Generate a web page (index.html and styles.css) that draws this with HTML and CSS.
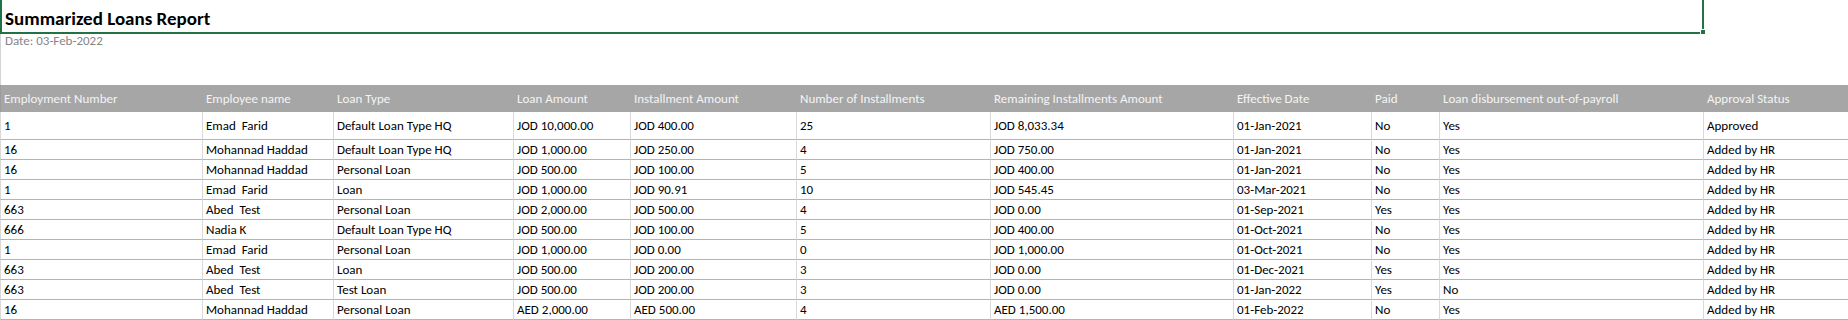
FILE: index.html
```html
<!doctype html>
<html lang="en">
  <head>
    <meta charset="UTF-8" />
    <meta name="viewport" content="width=device-width, initial-scale=1.0" />
    <title>Summarized Loans Report</title>
    <link rel="stylesheet" href="styles.css">
  </head>
  <body>
    <div class="sheet">
      <div class="title-cell">
        <h1 class="title">Summarized Loans Report</h1>
        <span class="fill-handle"></span>
      </div>
      <div class="date-row">Date: 03-Feb-2022</div>

      <table class="report">
        <colgroup>
          <col style="width: 202px" />
          <col style="width: 131px" />
          <col style="width: 180px" />
          <col style="width: 117px" />
          <col style="width: 166px" />
          <col style="width: 194px" />
          <col style="width: 243px" />
          <col style="width: 138px" />
          <col style="width: 68px" />
          <col style="width: 264px" />
          <col style="width: 145px" />
        </colgroup>
        <thead>
          <tr>
            <th>Employment Number</th>
            <th>Employee name</th>
            <th>Loan Type</th>
            <th>Loan Amount</th>
            <th>Installment Amount</th>
            <th>Number of Installments</th>
            <th>Remaining Installments Amount</th>
            <th>Effective Date</th>
            <th>Paid</th>
            <th>Loan disbursement out-of-payroll</th>
            <th>Approval Status</th>
          </tr>
        </thead>
        <tbody>
          <tr class="first">
            <td>1</td><td>Emad  Farid</td><td>Default Loan Type HQ</td><td>JOD 10,000.00</td><td>JOD 400.00</td><td>25</td><td>JOD 8,033.34</td><td>01-Jan-2021</td><td>No</td><td>Yes</td><td>Approved</td>
          </tr>
          <tr>
            <td>16</td><td>Mohannad Haddad</td><td>Default Loan Type HQ</td><td>JOD 1,000.00</td><td>JOD 250.00</td><td>4</td><td>JOD 750.00</td><td>01-Jan-2021</td><td>No</td><td>Yes</td><td>Added by HR</td>
          </tr>
          <tr>
            <td>16</td><td>Mohannad Haddad</td><td>Personal Loan</td><td>JOD 500.00</td><td>JOD 100.00</td><td>5</td><td>JOD 400.00</td><td>01-Jan-2021</td><td>No</td><td>Yes</td><td>Added by HR</td>
          </tr>
          <tr>
            <td>1</td><td>Emad  Farid</td><td>Loan</td><td>JOD 1,000.00</td><td>JOD 90.91</td><td>10</td><td>JOD 545.45</td><td>03-Mar-2021</td><td>No</td><td>Yes</td><td>Added by HR</td>
          </tr>
          <tr>
            <td>663</td><td>Abed  Test</td><td>Personal Loan</td><td>JOD 2,000.00</td><td>JOD 500.00</td><td>4</td><td>JOD 0.00</td><td>01-Sep-2021</td><td>Yes</td><td>Yes</td><td>Added by HR</td>
          </tr>
          <tr>
            <td>666</td><td>Nadia K</td><td>Default Loan Type HQ</td><td>JOD 500.00</td><td>JOD 100.00</td><td>5</td><td>JOD 400.00</td><td>01-Oct-2021</td><td>No</td><td>Yes</td><td>Added by HR</td>
          </tr>
          <tr>
            <td>1</td><td>Emad  Farid</td><td>Personal Loan</td><td>JOD 1,000.00</td><td>JOD 0.00</td><td>0</td><td>JOD 1,000.00</td><td>01-Oct-2021</td><td>No</td><td>Yes</td><td>Added by HR</td>
          </tr>
          <tr>
            <td>663</td><td>Abed  Test</td><td>Loan</td><td>JOD 500.00</td><td>JOD 200.00</td><td>3</td><td>JOD 0.00</td><td>01-Dec-2021</td><td>Yes</td><td>Yes</td><td>Added by HR</td>
          </tr>
          <tr>
            <td>663</td><td>Abed  Test</td><td>Test Loan</td><td>JOD 500.00</td><td>JOD 200.00</td><td>3</td><td>JOD 0.00</td><td>01-Jan-2022</td><td>Yes</td><td>No</td><td>Added by HR</td>
          </tr>
          <tr>
            <td>16</td><td>Mohannad Haddad</td><td>Personal Loan</td><td>AED 2,000.00</td><td>AED 500.00</td><td>4</td><td>AED 1,500.00</td><td>01-Feb-2022</td><td>No</td><td>Yes</td><td>Added by HR</td>
          </tr>
        </tbody>
      </table>
    </div>
  </body>
</html>
```

FILE: styles.css
```css
* {
  margin: 0;
  padding: 0;
  box-sizing: border-box;
}

body {
  font-family: Calibri, Carlito, Lato, "Liberation Sans", sans-serif;
  background: white;
  color: #000;
  width: 1848px;
  height: 320px;
  overflow: hidden;
}

.sheet {
  width: 1848px;
}

/* merged title cell, currently selected */
.title-cell {
  position: relative;
  width: 1704px;
  height: 34px;
  border: 2px solid #217346;
  border-top: none;
  padding: 8px 0 0 3px;
}

.title {
  font-size: 19px;
  line-height: 22px;
  font-weight: 700;
  color: #000;
}

.fill-handle {
  position: absolute;
  right: -4px;
  bottom: -3px;
  width: 6px;
  height: 6px;
  background: #217346;
  border: 1px solid white;
}

.date-row {
  height: 51px;
  border-left: 1px solid #d4d4d4;
  padding-left: 4px;
  font-size: 13px;
  line-height: 14px;
  color: #858585;
}

.report {
  width: 1848px;
  table-layout: fixed;
  border-collapse: separate;
  border-spacing: 0;
  font-size: 13px;
}

.report th,
.report td {
  padding: 0 0 0 3px;
  text-align: left;
  font-weight: 400;
  white-space: pre;
  overflow: hidden;
  vertical-align: middle;
}

.report th {
  height: 27px;
  background: #a6a6a6;
  color: #f4f4f4;
  border-left: 1px solid #a6a6a6;
}

.report th:first-child {
  border-left-color: #9c9c9c;
}

.report td {
  height: 20px;
  border-left: 1px solid #d9d9d9;
  border-bottom: 1px solid #b4b4b4;
}

.report tr.first td {
  height: 28px;
}
```
